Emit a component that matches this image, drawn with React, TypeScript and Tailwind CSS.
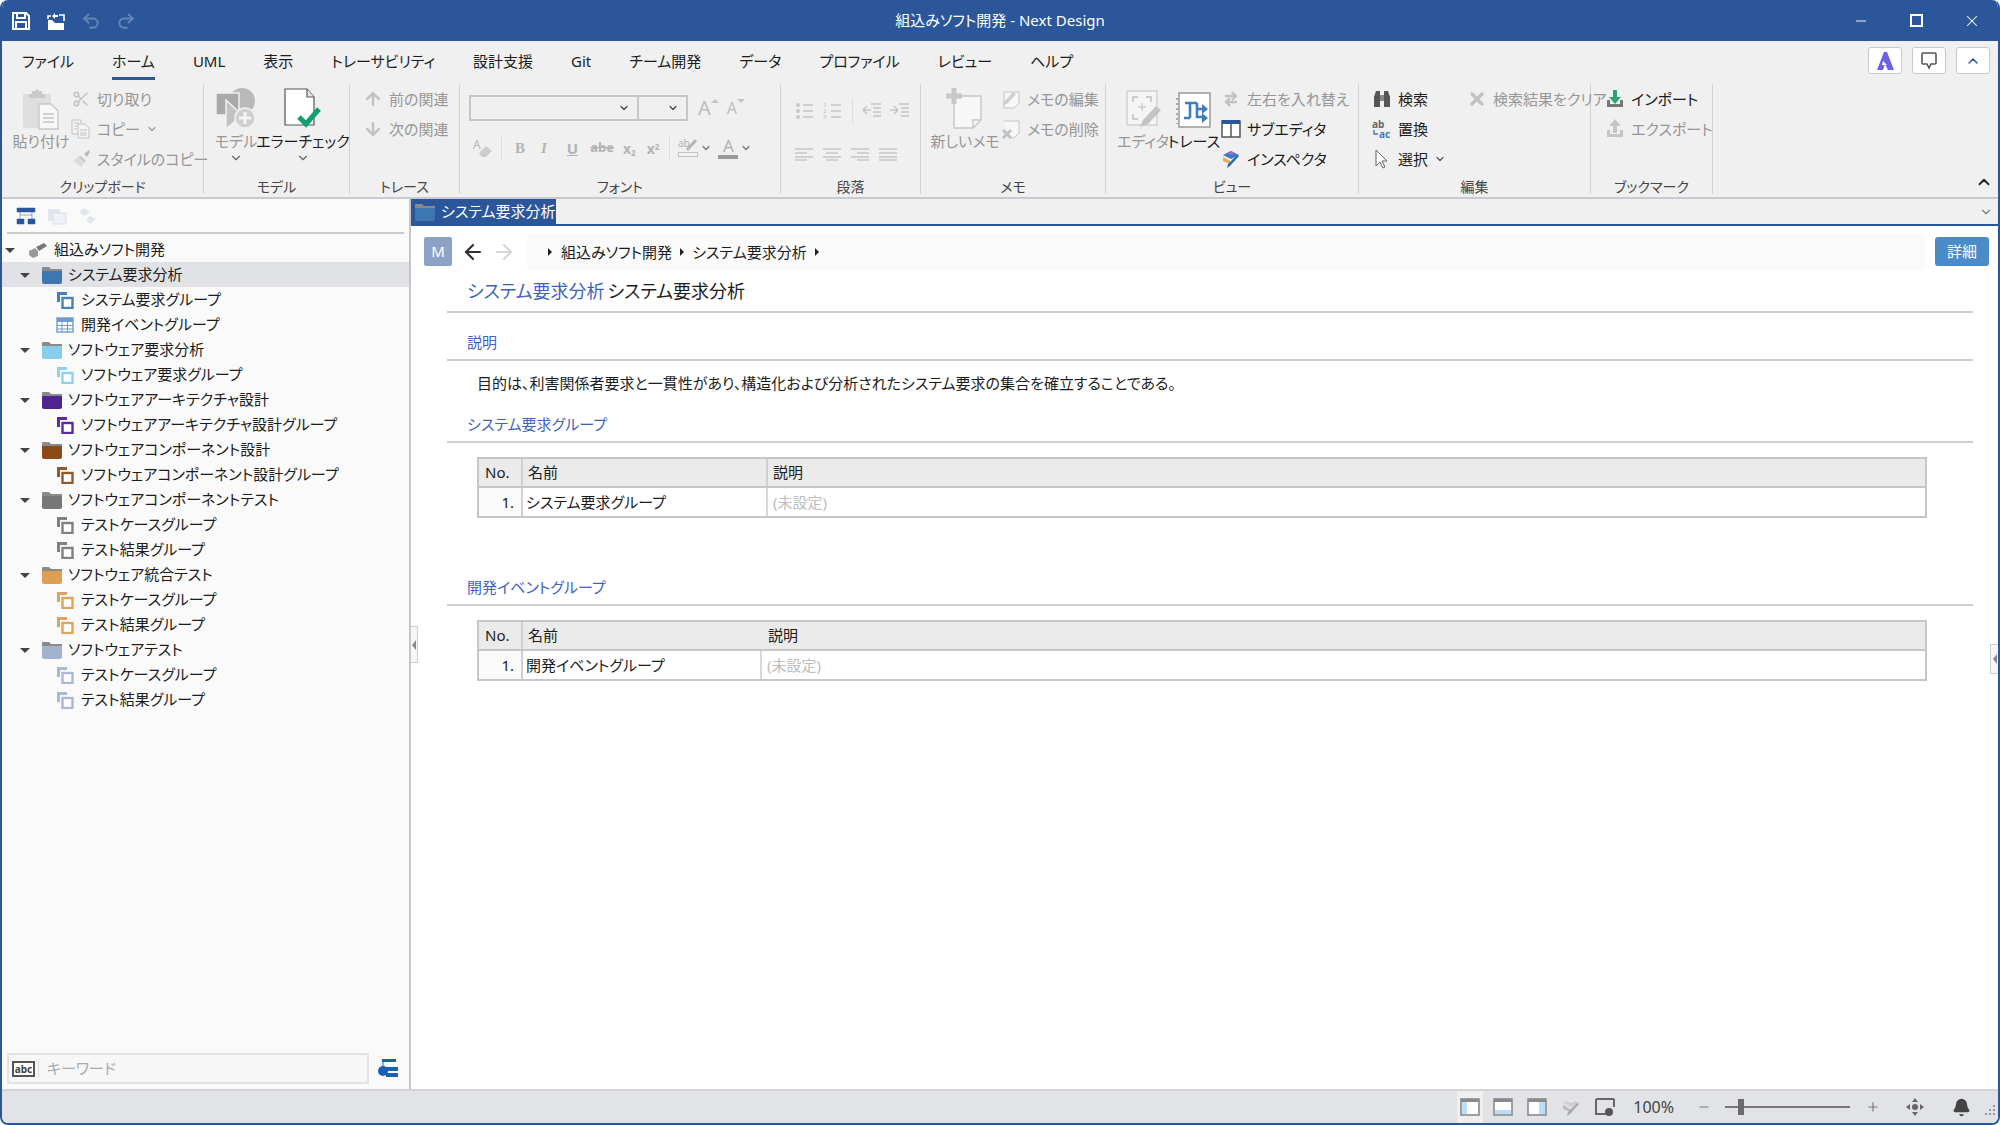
import type { ReactNode } from 'react';
import { ArrowDown, ArrowLeft, ArrowRight, ArrowUp, Bell, ChevronDown, ChevronUp, Minus, Plus, Redo2, Scissors, Undo2, X } from 'lucide-react';

const BLUE = '#2b579a';
const OFF = '#c2c2c2';

// small svg wrapper so the drawings stay short
function S({ w = 20, h = 20, children, className }: { w?: number; h?: number; children: ReactNode; className?: string }) {
  return (
    <svg width={w} height={h} viewBox={`0 0 ${w} ${h}`} fill="none" className={`shrink-0 ${className ?? ''}`}>
      {children}
    </svg>
  );
}

const SaveIcon = () => (
  <S>
    <path d="M2 2h13l3 3v13H2z" stroke="#fff" strokeWidth="2" />
    <path d="M6 2v5h8V2M5 18v-7h10v7" stroke="#fff" strokeWidth="2" />
  </S>
);
const OpenIcon = () => (
  <S w={22}>
    <path d="M3 9h4l3 3h9v7H3z" fill="#fff" />
    <path d="M14 4h5v6M3 8V5h3" stroke="#fff" strokeWidth="1.6" />
    <path d="M7 5l3-3v2h3v2h-3v2z" fill="#fff" />
  </S>
);
const PasteIcon = () => (
  <S w={38} h={42}>
    <rect x="1" y="6" width="28" height="34" rx="1" fill="#dedede" />
    <path d="M10 6V3h3l2-2 2 2h3v3h3v4H7V6z" fill="#c9c9c9" />
    <path d="M17 16h12l7 7v18H17z" fill="#f7f7f7" stroke="#c8c8c8" strokeWidth="1.4" />
    <path d="M21 26h11M21 30h11M21 34h11" stroke="#c4c4c4" strokeWidth="1.6" />
  </S>
);
const CopyIcon = () => (
  <S>
    <path d="M1 1h9v14H1z" fill="#f4f4f4" stroke={OFF} />
    <path d="M7 5h7l4 4v10H7z" fill="#f4f4f4" stroke={OFF} />
    <path d="M3 4h5M3 7h3M3 10h3M9 11h7M9 14h7M9 16h7" stroke={OFF} />
  </S>
);
const BrushIcon = () => (
  <S>
    <path d="M13 5l3 3 3-5-1-2z" fill="#b8b8b8" />
    <path d="M9 6l6 6-5 6-8-6z" fill="#dcdcdc" />
    <path d="M9 8l5 4" stroke="#c4c4c4" strokeWidth="2" />
  </S>
);
const ModelIcon = () => (
  <S w={40} h={42}>
    <circle cx="26" cy="13" r="13" fill="#b9b9b9" />
    <rect x="0" y="5" width="23" height="22" fill="#a9a9a9" stroke="#f0f0f0" strokeWidth="1.5" />
    <path d="M10 12l16 15-16 14z" fill="#c3c3c3" stroke="#f0f0f0" strokeWidth="1.5" />
    <circle cx="29" cy="30" r="10" fill="#cfcfcf" stroke="#f0f0f0" strokeWidth="1.5" />
    <path d="M29 24v12M23 30h12" stroke="#f4f4f4" strokeWidth="3" />
  </S>
);
const ErrorCheckIcon = () => (
  <S w={38} h={42}>
    <path d="M1 1h22l7 8v28H1z" fill="#fff" stroke="#555" strokeWidth="1.2" />
    <path d="M23 1v8h7" fill="#e8e8e8" stroke="#555" strokeWidth="1.2" />
    <path d="M15 29l7 7 13-15" stroke="#10a070" strokeWidth="5" />
  </S>
);
const EraserIcon = () => (
  <S>
    <text x="0" y="11" fontSize="12" fill="#b5b5b5">A</text>
    <path d="M6 15l7-7 6 5-6 6H9z" fill="#cdcdcd" />
  </S>
);
const HighlightIcon = () => (
  <S>
    <text x="0" y="9" fontSize="10" fill="#b0b0b0">ab</text>
    <path d="M9 12L18 2" stroke="#b5b5b5" strokeWidth="3" />
    <rect x="0.5" y="14.5" width="19" height="4" stroke="#c4c4c4" />
  </S>
);
const ListIcon = ({ nums }: { nums?: boolean }) => (
  <S>
    {nums ? (
      <>
        <text x="0" y="6" fontSize="6" fill="#c0c0c0">1</text>
        <text x="0" y="12" fontSize="6" fill="#c0c0c0">2</text>
        <text x="0" y="18" fontSize="6" fill="#c0c0c0">3</text>
      </>
    ) : (
      <>
        <circle cx="3" cy="4" r="2" fill="#c8c8c8" />
        <circle cx="3" cy="10" r="2" fill="#c8c8c8" />
        <circle cx="3" cy="16" r="2" fill="#c8c8c8" />
      </>
    )}
    <path d="M8 4h10M8 10h10M8 16h10" stroke="#c4c4c4" strokeWidth="1.4" />
  </S>
);
const IndentIcon = ({ out }: { out?: boolean }) => (
  <S>
    <path d={out ? 'M9 3h10M11 7h8M11 11h8M11 15h8M1 9h8M1 9l4-4M1 9l4 4' : 'M10 3h10M12 7h8M12 11h8M12 15h8M1 9h8M9 9l-4-4M9 9l-4 4'} stroke="#c4c4c4" strokeWidth="1.5" />
  </S>
);
const AlignIcon = ({ d }: { d: string }) => (
  <S w={18} h={14}>
    <path d={d} stroke="#c6c6c6" strokeWidth="1.4" />
  </S>
);
const NewMemoIcon = () => (
  <S w={38} h={42}>
    <path d="M8 8h27v24l-8 8H8z" fill="#f7f7f7" stroke="#c6c6c6" strokeWidth="1.4" />
    <path d="M27 40v-8h8" stroke="#c6c6c6" strokeWidth="1.4" />
    <path d="M8 0v16M0 8h16" stroke="#c8c8c8" strokeWidth="5" />
  </S>
);
const EditMemoIcon = () => (
  <S>
    <path d="M3 3h15v11l-5 5H3z" fill="#f7f7f7" stroke="#c4c4c4" />
    <path d="M3 13L12 3l3 2-9 10-4 1z" fill="#cfcfcf" />
  </S>
);
const DelMemoIcon = () => (
  <S>
    <path d="M3 2h15v12l-5 5H8" fill="#f7f7f7" stroke="#c4c4c4" />
    <path d="M2 11l8 8M10 11l-8 8" stroke="#c2c2c2" strokeWidth="3" />
  </S>
);
const EditorIcon = () => (
  <S w={38} h={40}>
    <rect x="3" y="1" width="30" height="34" fill="#f5f5f5" stroke="#d4d4d4" strokeWidth="1.6" />
    <path d="M9 12V7h5M22 7h5v5M9 24v5h5" stroke="#bdbdbd" strokeWidth="1.4" />
    <path d="M18 13v8M14 17h8" stroke="#bdbdbd" />
    <path d="M16 37l3-7 13-14 5 4-13 14z" fill="#c4c4c4" />
  </S>
);
const TraceIcon = () => (
  <S w={36} h={38}>
    <rect x="3" y="1" width="31" height="34" fill="#fff" stroke="#a9a9a9" strokeWidth="1.8" />
    <path d="M1 6v26" stroke="#aaa" strokeWidth="2" strokeDasharray="2 3" />
    <path d="M9 11h12M14 11v15M8 26h6M21 11v14h6M21 17h6" stroke="#3f7bbf" strokeWidth="2.6" />
    <path d="M26 12l6 5-6 5zM26 21l6 5-6 5z" fill="#3f7bbf" />
  </S>
);
const SwapIcon = () => (
  <S>
    <path d="M4 7h11M11 3l4 4-4 4M16 13H5M9 9l-4 4 4 4" stroke="#c2c2c2" strokeWidth="2.4" />
  </S>
);
const SubEditorIcon = () => (
  <S>
    <rect x="1" y="2" width="18" height="16" fill="#fff" stroke="#555" strokeWidth="1.5" />
    <rect x="1" y="1" width="18" height="4" fill={BLUE} />
    <path d="M10 5v13" stroke="#555" strokeWidth="1.5" />
  </S>
);
const InspectorIcon = ({ mono }: { mono?: boolean }) => (
  <S>
    <path d="M2 6l8-4 8 4-8 4z" fill={mono ? '#cfcfcf' : '#3f7bbf'} />
    <path d="M6 4l4-2 4 2-4 2z" fill={mono ? '#e8e8e8' : '#a66ad0'} />
    <path d="M2 8l7 4v3l-7-3z" fill={mono ? '#bdbdbd' : '#e9a94f'} />
    <path d="M18 7L9 17l-3 2 1-4 9-9z" fill={mono ? '#a8a8a8' : '#2b6cb0'} />
  </S>
);
const BinocIcon = () => (
  <S>
    <path d="M2 18V8l2-6h4v16zM18 18V8l-2-6h-4v16z" fill="#555" />
    <path d="M8 6h4v6H8z" fill="#888" />
  </S>
);
const ReplaceIcon = () => (
  <S>
    <text x="0" y="9" fontSize="10" fontWeight="700" fill="#666">ab</text>
    <text x="7" y="19" fontSize="10" fontWeight="700" fill="#3f7bbf">ac</text>
    <path d="M2 11v4h4" stroke="#3f7bbf" strokeWidth="1.4" />
  </S>
);
const CursorIcon = () => (
  <S>
    <path d="M4 1l11 11h-5l3 6-2 1-3-6-4 4z" fill="#fff" stroke="#666" />
  </S>
);
const ImportIcon = () => (
  <S>
    <path d="M2 11v7h16v-7h-3v4H5v-4z" fill="#777" />
    <path d="M8 1h4v7h4l-6 7-6-7h4z" fill="#2da36f" />
  </S>
);
const ExportIcon = () => (
  <S>
    <path d="M2 11v7h16v-7h-3v4H5v-4z" fill="#c6c6c6" />
    <path d="M8 14h4V7h4l-6-7-6 7h4z" fill="#c6c6c6" />
  </S>
);
const AppMark = () => (
  <S w={20} h={20}>
    <path d="M9 1L2 19h6l2-6 3 6h6L12 1z" fill="#6d5fe6" />
    <path d="M8 10l4 4H7z" fill="#fff" />
  </S>
);
const BalloonIcon = () => (
  <S w={16} h={18}>
    <path d="M2 1h12a1 1 0 011 1v9a1 1 0 01-1 1h-4l-2 4-2-4H2a1 1 0 01-1-1V2a1 1 0 011-1z" stroke="#555" strokeWidth="1.6" />
  </S>
);
const Tri = () => <span className="h-0 w-0 border-y-[4px] border-l-[4px] border-y-transparent border-l-[#222]" />;
const Chev = ({ c = '#555' }: { c?: string }) => <ChevronDown size={12} color={c} strokeWidth={2.4} className="shrink-0" />;

const Folder = ({ color, w = 20 }: { color: string; w?: number }) => (
  <S w={w} h={18}>
    <path d="M0 2a1 1 0 011-1h6l2 2h11v3H0z" fill="#8a8a8a" />
    <path d="M0 5h20v11a2 2 0 01-2 2H2a2 2 0 01-2-2z" fill={color} />
  </S>
);
const GroupIcon = ({ color }: { color: string }) => (
  <S w={18} h={18}>
    <path d="M1 1h10v3H4v7H1z" fill={color} />
    <rect x="6.5" y="7" width="10" height="10" fill="#fff" stroke={color} strokeWidth="2.4" />
  </S>
);
const TableIcon = ({ color }: { color: string }) => (
  <S w={18} h={18}>
    <rect x="1" y="2" width="16" height="14" fill="#fff" stroke={color} strokeWidth="1.4" />
    <rect x="1" y="2" width="16" height="4" fill={color} />
    <path d="M1 9.5h16M1 13h16M6 6v10M11.500 6v10" stroke={color} />
  </S>
);

function RibbonGroup({ label, width, children }: { label: string; width: string; children: ReactNode }) {
  return (
    <div className={`flex h-[110px] shrink-0 flex-col border-r border-[#d2d2d2] ${width}`}>
      <div className="h-[90px]">{children}</div>
      <div className="h-[20px] text-center text-[14px] leading-[26px] text-[#444]">{label}</div>
    </div>
  );
}

function SmallBtn({ icon, text, off, extra }: { icon: ReactNode; text: string; off?: boolean; extra?: ReactNode }) {
  return (
    <div className={`flex h-[30px] items-center gap-[6px] text-[15px] whitespace-nowrap ${off ? 'text-[#969696]' : 'text-[#1c1c1c]'}`}>
      <span className="flex w-[20px] shrink-0 justify-center">{icon}</span>
      <span>{text}</span>
      {extra}
    </div>
  );
}

function LargeBtn({ icon, text, off, arrow, className }: { icon: ReactNode; text: string; off?: boolean; arrow?: boolean; className?: string }) {
  return (
    <div className={`flex flex-col items-center text-[15px] whitespace-nowrap ${off ? 'text-[#969696]' : 'text-[#1c1c1c]'} ${className ?? ''}`}>
      <div className="flex h-[46px] items-end justify-center">{icon}</div>
      <div className="leading-[22px]">{text}</div>
      {arrow && <ChevronDown size={14} color="#666" strokeWidth={2} className="mt-[-1px]" />}
    </div>
  );
}

const TABS = ['ファイル', 'ホーム', 'UML', '表示', 'トレーサビリティ', '設計支援', 'Git', 'チーム開発', 'データ', 'プロファイル', 'レビュー', 'ヘルプ'];

function Ribbon() {
  return (
    <div className="flex h-[158px] shrink-0 flex-col border-b-2 border-[#c9c9d0] bg-[#f0f0f0]">
      <div className="flex h-[39px] items-center pl-[20px] text-[15px] text-[#1c1c1c]">
        <div className="flex gap-[38px]">
          {TABS.map((t) => (
            <div key={t} className={`relative pt-[1px] whitespace-nowrap ${t === 'ホーム' ? 'font-normal' : ''}`}>
              {t}
              {t === 'ホーム' && <span className="absolute right-0 bottom-[-8px] left-0 h-[3px] bg-[#2b579a]" />}
            </div>
          ))}
        </div>
        <div className="ml-auto flex gap-[10px] pr-[8px]">
          <div className="flex h-[27px] w-[34px] items-center justify-center rounded-[3px] border border-[#c9c9c9] bg-white"><AppMark /></div>
          <div className="flex h-[27px] w-[34px] items-center justify-center rounded-[3px] border border-[#c9c9c9] bg-white"><BalloonIcon /></div>
          <div className="flex h-[27px] w-[34px] items-center justify-center rounded-[3px] border border-[#c9c9c9] bg-white"><ChevronUp size={16} color={BLUE} strokeWidth={2.2} /></div>
        </div>
      </div>
      <div className="mt-[4px] flex">
        <RibbonGroup label="クリップボード" width="w-[202px]">
          <div className="flex">
            <LargeBtn icon={<PasteIcon />} text="貼り付け" off className="ml-[12px] w-[54px]" />
            <div className="ml-[3px]">
              <SmallBtn icon={<Scissors size={18} color={OFF} strokeWidth={2} />} text="切り取り" off />
              <SmallBtn icon={<CopyIcon />} text="コピー" off extra={<Chev c="#999" />} />
              <SmallBtn icon={<BrushIcon />} text="スタイルのコピー" off />
            </div>
          </div>
        </RibbonGroup>
        <RibbonGroup label="モデル" width="w-[146px]">
          <div className="flex pl-[6px]">
            <LargeBtn icon={<ModelIcon />} text="モデル" off arrow className="w-[52px]" />
            <LargeBtn icon={<ErrorCheckIcon />} text="エラーチェック" arrow className="w-[80px] pl-[2px]" />
          </div>
        </RibbonGroup>
        <RibbonGroup label="トレース" width="w-[110px]">
          <div className="pl-[13px]">
            <SmallBtn icon={<ArrowUp size={20} color={OFF} strokeWidth={3} />} text="前の関連" off />
            <SmallBtn icon={<ArrowDown size={20} color={OFF} strokeWidth={3} />} text="次の関連" off />
          </div>
        </RibbonGroup>
        <RibbonGroup label="フォント" width="w-[321px]">
          <div className="pt-[11px] pl-[9px]">
            <div className="flex items-center">
              <div className="flex h-[26px] w-[170px] items-center justify-end border-2 border-[#c6c6c6] pr-[7px]"><Chev c="#444" /></div>
              <div className="ml-[-2px] flex h-[26px] w-[51px] items-center justify-end border-2 border-[#c6c6c6] pr-[7px]"><Chev c="#444" /></div>
              <div className="ml-[10px] flex items-start text-[20px] leading-[22px] text-[#bdbdbd]">A<span className="mt-[2px] h-0 w-0 border-x-[4px] border-b-[4px] border-x-transparent border-b-[#c4c4c4]" /></div>
              <div className="ml-[8px] flex items-start text-[16px] leading-[22px] text-[#bdbdbd]">A<span className="mt-[2px] h-0 w-0 border-x-[4px] border-t-[4px] border-x-transparent border-t-[#c4c4c4]" /></div>
            </div>
            <div className="mt-[14px] flex h-[26px] items-center pl-[4px] text-[#b3b3b3]">
              <EraserIcon />
              <span className="ml-[8px] h-[24px] w-px bg-[#dedede]" />
              <span className="ml-[13px] text-[15px] font-bold [font-family:'Liberation_Serif',serif]">B</span>
              <span className="ml-[16px] text-[15px] font-bold italic [font-family:'Liberation_Serif',serif]">I</span>
              <span className="ml-[20px] text-[15px] font-bold underline">U</span>
              <span className="ml-[12px] text-[13px] font-bold line-through">abe</span>
              <span className="ml-[9px] text-[14px] font-bold">x<sub className="text-[8px]">2</sub></span>
              <span className="ml-[11px] text-[14px] font-bold">x<sup className="text-[8px]">2</sup></span>
              <span className="ml-[10px] h-[24px] w-px bg-[#dedede]" />
              <span className="ml-[8px]"><HighlightIcon /></span>
              <span className="ml-[2px]"><Chev c="#777" /></span>
              <span className="ml-[6px] flex flex-col items-center text-[17px] leading-[18px] text-[#b0b0b0]">A<span className="h-[4px] w-[20px] bg-[#9a9a9a]" /></span>
              <span className="ml-[2px]"><Chev c="#777" /></span>
            </div>
          </div>
        </RibbonGroup>
        <RibbonGroup label="段落" width="w-[140px]">
          <div className="pt-[14px] pl-[14px]">
            <div className="flex items-center">
              <ListIcon />
              <span className="ml-[8px]"><ListIcon nums /></span>
              <span className="ml-[9px] h-[26px] w-px bg-[#dedede]" />
              <span className="ml-[9px]"><IndentIcon out /></span>
              <span className="ml-[7px]"><IndentIcon /></span>
            </div>
            <div className="mt-[23px] flex gap-[10px]">
              <AlignIcon d="M0 2h18M0 6h12M0 10h18M0 13h12" />
              <AlignIcon d="M0 2h18M3 6h12M0 10h18M3 13h12" />
              <AlignIcon d="M0 2h18M6 6h12M0 10h18M6 13h12" />
              <AlignIcon d="M0 2h18M0 6h18M0 10h18M0 13h18" />
            </div>
          </div>
        </RibbonGroup>
        <RibbonGroup label="メモ" width="w-[185px]">
          <div className="flex">
            <LargeBtn icon={<NewMemoIcon />} text="新しいメモ" off className="ml-[13px] w-[62px]" />
            <div className="ml-[5px]">
              <SmallBtn icon={<EditMemoIcon />} text="メモの編集" off />
              <SmallBtn icon={<DelMemoIcon />} text="メモの削除" off />
            </div>
          </div>
        </RibbonGroup>
        <RibbonGroup label="ビュー" width="w-[253px]">
          <div className="flex">
            <LargeBtn icon={<EditorIcon />} text="エディタ" off className="ml-[14px] w-[46px]" />
            <LargeBtn icon={<TraceIcon />} text="トレース" className="ml-[5px] w-[46px]" />
            <div className="ml-[4px]">
              <SmallBtn icon={<SwapIcon />} text="左右を入れ替え" off />
              <SmallBtn icon={<SubEditorIcon />} text="サブエディタ" />
              <SmallBtn icon={<InspectorIcon />} text="インスペクタ" />
            </div>
          </div>
        </RibbonGroup>
        <RibbonGroup label="編集" width="w-[232px]">
          <div className="flex pl-[13px]">
            <div>
              <SmallBtn icon={<BinocIcon />} text="検索" />
              <SmallBtn icon={<ReplaceIcon />} text="置換" />
              <SmallBtn icon={<CursorIcon />} text="選択" extra={<Chev />} />
            </div>
            <div className="ml-[21px]">
              <SmallBtn icon={<X size={20} color={OFF} strokeWidth={4} />} text="検索結果をクリア" off />
            </div>
          </div>
        </RibbonGroup>
        <RibbonGroup label="ブックマーク" width="w-[122px]">
          <div className="pl-[14px]">
            <SmallBtn icon={<ImportIcon />} text="インポート" />
            <SmallBtn icon={<ExportIcon />} text="エクスポート" off />
          </div>
        </RibbonGroup>
        <div className="ml-auto self-end pr-[5px] pb-[3px]"><ChevronUp size={18} color="#222" strokeWidth={2.4} /></div>
      </div>
    </div>
  );
}

const TREE = [
  { lv: 0, t: '組込みソフト開発', kind: 'root', c: '' },
  { lv: 1, t: 'システム要求分析', kind: 'folder', c: '#3e76b2', sel: true },
  { lv: 2, t: 'システム要求グループ', kind: 'group', c: '#4a80b8' },
  { lv: 2, t: '開発イベントグループ', kind: 'table', c: '#6f9bc8' },
  { lv: 1, t: 'ソフトウェア要求分析', kind: 'folder', c: '#87ceeb' },
  { lv: 2, t: 'ソフトウェア要求グループ', kind: 'group', c: '#8fd0ee' },
  { lv: 1, t: 'ソフトウェアアーキテクチャ設計', kind: 'folder', c: '#4f2491' },
  { lv: 2, t: 'ソフトウェアアーキテクチャ設計グループ', kind: 'group', c: '#5b2d9c' },
  { lv: 1, t: 'ソフトウェアコンポーネント設計', kind: 'folder', c: '#8b4a17' },
  { lv: 2, t: 'ソフトウェアコンポーネント設計グループ', kind: 'group', c: '#8f5a2f' },
  { lv: 1, t: 'ソフトウェアコンポーネントテスト', kind: 'folder', c: '#777777' },
  { lv: 2, t: 'テストケースグループ', kind: 'group', c: '#808080' },
  { lv: 2, t: 'テスト結果グループ', kind: 'group', c: '#808080' },
  { lv: 1, t: 'ソフトウェア統合テスト', kind: 'folder', c: '#dd9f55' },
  { lv: 2, t: 'テストケースグループ', kind: 'group', c: '#dea35c' },
  { lv: 2, t: 'テスト結果グループ', kind: 'group', c: '#dea35c' },
  { lv: 1, t: 'ソフトウェアテスト', kind: 'folder', c: '#a3b2cf' },
  { lv: 2, t: 'テストケースグループ', kind: 'group', c: '#aab8d4' },
  { lv: 2, t: 'テスト結果グループ', kind: 'group', c: '#aab8d4' },
];

const Caret = () => <span className="mt-[1px] h-0 w-0 border-x-[5px] border-t-[5px] border-x-transparent border-t-[#444]" />;

function TreeRow({ row }: { row: (typeof TREE)[number] }) {
  return (
    <div className={`flex h-[25px] items-center text-[15px] whitespace-nowrap text-[#1c1c1c] ${row.sel ? 'bg-[#e1e2e6]' : ''}`}>
      {row.lv === 0 && (
        <>
          <span className="ml-[3px] flex w-[10px]"><Caret /></span>
          <span className="ml-[14px]">
            <S w={18} h={16}>
              <path d="M7 5l8-4 3 3-8 5z" fill="#777" />
              <path d="M0 9l6-3 3 3v5l-5 2-4-3z" fill="#9a9a9a" />
            </S>
          </span>
          <span className="ml-[7px]">{row.t}</span>
        </>
      )}
      {row.lv === 1 && (
        <>
          <span className="ml-[18px] flex w-[10px]"><Caret /></span>
          <span className="ml-[12px]"><Folder color={row.c} /></span>
          <span className="ml-[6px]">{row.t}</span>
        </>
      )}
      {row.lv === 2 && (
        <>
          <span className="ml-[54px]">{row.kind === 'table' ? <TableIcon color={row.c} /> : <GroupIcon color={row.c} />}</span>
          <span className="ml-[7px]">{row.t}</span>
        </>
      )}
    </div>
  );
}

function LeftPanel() {
  return (
    <div className="flex w-[409px] shrink-0 flex-col border-r-2 border-[#c6c6c6] bg-[#fafafa]">
      <div className="mx-[5px] flex h-[35px] items-center gap-[11px] border-b-2 border-[#c9c9c9] pl-[9px]">
        <S>
          <path d="M1 2h18v4H1zM1 13h7v5H1zM12 13h7v5h-7zM4 6v7M16 6v7M4 9h12" fill={BLUE} stroke={BLUE} strokeWidth="0.5" />
        </S>
        <S>
          <path d="M1 3h12v12H1z" fill="#dfe6ef" />
          <path d="M6 7h13v11H6z" fill="#eef2f7" stroke="#d6dfea" />
        </S>
        <S>
          <path d="M1 6l5-4 6 4-5 4zM12 10l6 3-6 5-4-4z" fill="#dfe6ef" />
        </S>
      </div>
      <div className="pt-[3px]">
        {TREE.map((r, i) => (
          <TreeRow key={i} row={r} />
        ))}
      </div>
      <div className="mt-auto flex items-center pb-[5px] pl-[5px]">
        <div className="flex h-[31px] w-[362px] items-center border-2 border-[#e3e3e3] bg-[#f7f7f7]">
          <span className="flex w-[30px] justify-center border-r border-[#dcdcdc]">
            <span className="border-2 border-[#555] bg-white px-[1px] text-[10px] leading-[12px] font-bold text-[#444]">abc</span>
          </span>
          <span className="ml-[8px] text-[15px] text-[#aaaaaa]">キーワード</span>
        </div>
        <span className="ml-[9px]">
          <S>
            <path d="M4 0h14v3H4zM8 8h12v4H8zM8 14h12v4H8z" fill="#1a5fb4" />
            <circle cx="5" cy="12" r="5" fill="#1a5fb4" />
            <path d="M5 3v5" stroke="#1a5fb4" />
          </S>
        </span>
      </div>
    </div>
  );
}

function SectionHead({ children, h, big }: { children: ReactNode; h: string; big?: boolean }) {
  return (
    <div className={`flex items-end border-b-2 border-[#cfcfcf] pb-[6px] pl-[20px] ${h} ${big ? 'text-[18px]' : 'text-[15px]'} text-[#3f63bd]`}>
      <div className="leading-[22px]">{children}</div>
    </div>
  );
}

function RefTable({ name, cols, headSplit }: { name: string; cols: string; headSplit?: boolean }) {
  return (
    <div className="ml-[30px] w-[1450px] border-2 border-[#c6c6c6] text-[15px] text-[#1c1c1c]">
      <div className={`grid h-[29px] items-center border-b-2 border-[#c6c6c6] bg-[#ebebeb] ${cols}`}>
        <div className="flex h-full items-center border-r-2 border-[#d0d0d0] pl-[6px]">No.</div>
        <div className={`flex h-full items-center pl-[5px] ${headSplit ? 'border-r-2 border-[#d0d0d0]' : ''}`}>名前</div>
        <div className={headSplit ? 'pl-[5px]' : 'pl-[6px]'}>説明</div>
      </div>
      <div className={`grid h-[28px] items-center bg-white ${cols}`}>
        <div className="flex h-full items-center justify-end border-r-2 border-[#d0d0d0] bg-[#fafafa] pr-[7px]">1.</div>
        <div className="flex h-full items-center border-r-2 border-[#d8d8d8] pl-[3px]">{name}</div>
        <div className="pl-[5px] text-[#bdbdbd]">(未設定)</div>
      </div>
    </div>
  );
}

function Content() {
  return (
    <div className="relative flex min-w-0 flex-1 flex-col">
      <div className="flex h-[25px] shrink-0 items-center bg-[#f0f0f0]">
        <div className="flex h-full w-[145px] items-center gap-[5px] bg-[#2b579a] pl-[4px] text-[15px] text-white">
          <Folder color="#3e76b2" w={20} />
          <span className="ml-[1px]">システム要求分析</span>
        </div>
        <ChevronDown size={14} color="#777" className="mr-[5px] ml-auto" />
      </div>
      <div className="h-[2px] shrink-0 bg-[#2b579a]" />
      <div className="flex h-[45px] shrink-0 items-end">
        <div className="mb-[5px] ml-[13px] flex h-[29px] w-[28px] items-center justify-center rounded-[2px] bg-[#8ca3c5] text-[15px] text-white">M</div>
        <ArrowLeft size={24} color="#333" strokeWidth={2.2} className="mb-[7px] ml-[9px]" />
        <ArrowRight size={24} color="#d6d6d6" strokeWidth={2.2} className="mb-[7px] ml-[7px]" />
        <div className="ml-[11px] flex h-[38px] w-[1398px] items-center gap-[8px] rounded-[4px] bg-[#fafafa] pl-[21px] text-[15px] text-[#1c1c1c]">
          <Tri />
          <span className="ml-[1px]">組込みソフト開発</span>
          <Tri />
          <span>システム要求分析</span>
          <Tri />
        </div>
        <div className="mb-[5px] ml-[10px] flex h-[29px] w-[54px] items-center justify-center rounded-[3px] bg-[#4a8bc9] text-[15px] text-white">詳細</div>
      </div>
      <div className="mr-[25px] ml-[36px]">
        <div className="flex h-[42px] items-center border-b-2 border-[#cfcfcf] pl-[20px] text-[18px]">
          <span className="text-[#3f63bd]">システム要求分析</span>
          <span className="ml-[3px] text-[#1c1c1c]">システム要求分析</span>
        </div>
        <SectionHead h="h-[48px]">説明</SectionHead>
        <div className="flex h-[44px] items-center pl-[30px] text-[15px] text-[#1c1c1c]">
          目的は、利害関係者要求と一貫性があり、構造化および分析されたシステム要求の集合を確立することである。
        </div>
        <SectionHead h="h-[38px]">システム要求グループ</SectionHead>
        <div className="mt-[14px]">
          <RefTable name="システム要求グループ" cols="grid-cols-[44px_245px_1fr]" headSplit />
        </div>
        <div className="mt-[50px]">
          <SectionHead h="h-[38px]">開発イベントグループ</SectionHead>
        </div>
        <div className="mt-[14px]">
          <RefTable name="開発イベントグループ" cols="grid-cols-[44px_239px_1fr]" />
        </div>
      </div>
      <div className="absolute top-[427px] left-0 flex h-[37px] w-[7px] items-center justify-center border border-l-0 border-[#cfcfcf] bg-[#f7f7f7]">
        <span className="h-0 w-0 border-y-[5px] border-r-[4px] border-y-transparent border-r-[#888]" />
      </div>
      <div className="absolute top-[445px] right-0 flex h-[30px] w-[8px] items-center justify-center border border-r-0 border-[#cfcfcf] bg-[#f7f7f7]">
        <span className="h-0 w-0 border-y-[5px] border-r-[4px] border-y-transparent border-r-[#888]" />
      </div>
    </div>
  );
}

const ViewIcon = ({ kind }: { kind: 'left' | 'bottom' | 'right' }) => (
  <S w={20} h={18}>
    <rect x="1" y="1" width="18" height="16" fill="#fff" stroke="#8a8a8a" strokeWidth="1.6" />
    <rect x="1" y="1" width="18" height="3" fill="#8a8a8a" />
    {kind === 'left' && <rect x="2" y="4" width="5" height="12" fill="#bcdcf7" />}
    {kind === 'bottom' && <rect x="2" y="12" width="16" height="4" fill="#bcdcf7" />}
    {kind === 'right' && <rect x="12" y="4" width="6" height="12" fill="#bcdcf7" />}
  </S>
);

function StatusBar() {
  return (
    <div className="flex h-[34px] shrink-0 items-center justify-end border-t-2 border-[#d4d4d4] bg-[#e1e3e6] text-[#444]">
      <div className="flex h-full w-[26px] items-center justify-center bg-[#efefef]"><ViewIcon kind="left" /></div>
      <div className="ml-[10px]"><ViewIcon kind="bottom" /></div>
      <div className="ml-[14px]"><ViewIcon kind="right" /></div>
      <div className="ml-[14px]"><InspectorIcon mono /></div>
      <div className="ml-[14px]">
        <S>
          <path d="M1 2h18M1 2v15h10M19 2v8" stroke="#666" strokeWidth="2" />
          <circle cx="14" cy="15" r="4" fill="#555" />
        </S>
      </div>
      <div className="ml-[18px] text-[16px]">100%</div>
      <Minus size={14} color="#777" className="ml-[23px]" />
      <div className="relative ml-[14px] h-[2px] w-[125px] bg-[#777]">
        <span className="absolute top-[-7px] left-[13px] h-[16px] w-[6px] bg-[#6b6b6b]" />
      </div>
      <Plus size={14} color="#777" className="ml-[16px]" />
      <div className="ml-[25px]">
        <S>
          <path d="M10 1l3 4H7zM10 19l3-4H7zM1 10l4-3v6zM19 10l-4-3v6z" fill="#666" />
          <circle cx="10" cy="10" r="3" fill="#666" />
        </S>
      </div>
      <Bell size={19} color="#444" fill="#444" className="ml-[27px]" />
      <div className="mr-[3px] ml-[14px] grid grid-cols-3 gap-[2px] pt-[6px]">
        <span /><span /><span className="h-[2px] w-[2px] bg-[#999]" />
        <span /><span className="h-[2px] w-[2px] bg-[#999]" /><span className="h-[2px] w-[2px] bg-[#999]" />
        <span className="h-[2px] w-[2px] bg-[#999]" /><span className="h-[2px] w-[2px] bg-[#999]" /><span className="h-[2px] w-[2px] bg-[#999]" />
      </div>
    </div>
  );
}

export default function App() {
  return (
    <div className="h-[1125px] w-[2000px] overflow-hidden bg-white [font-family:'Noto_Sans','Noto_Sans_CJK_JP',sans-serif] [font-feature-settings:'palt']">
      <div className="flex h-full flex-col overflow-hidden rounded-[8px] border-x-2 border-b-2 border-[#2b579a]">
        <div className="grid h-[41px] shrink-0 grid-cols-3 items-center bg-[#2b579a] text-white">
          <div className="flex items-center pl-[9px]">
            <SaveIcon />
            <span className="ml-[14px]"><OpenIcon /></span>
            <Undo2 size={20} color="#6484b8" strokeWidth={2.4} className="ml-[14px]" />
            <Redo2 size={20} color="#6484b8" strokeWidth={2.4} className="ml-[15px]" />
          </div>
          <div className="text-center text-[15px]">組込みソフト開発 - Next Design</div>
          <div className="flex items-center justify-end pr-[17px]">
            <Minus size={16} color="#fff" strokeWidth={1.4} />
            <span className="ml-[41px] h-[13px] w-[13px] border-2 border-white" />
            <X size={18} color="#fff" strokeWidth={1.4} className="ml-[40px]" />
          </div>
        </div>
        <Ribbon />
        <div className="flex min-h-0 flex-1">
          <LeftPanel />
          <Content />
        </div>
        <StatusBar />
      </div>
    </div>
  );
}
